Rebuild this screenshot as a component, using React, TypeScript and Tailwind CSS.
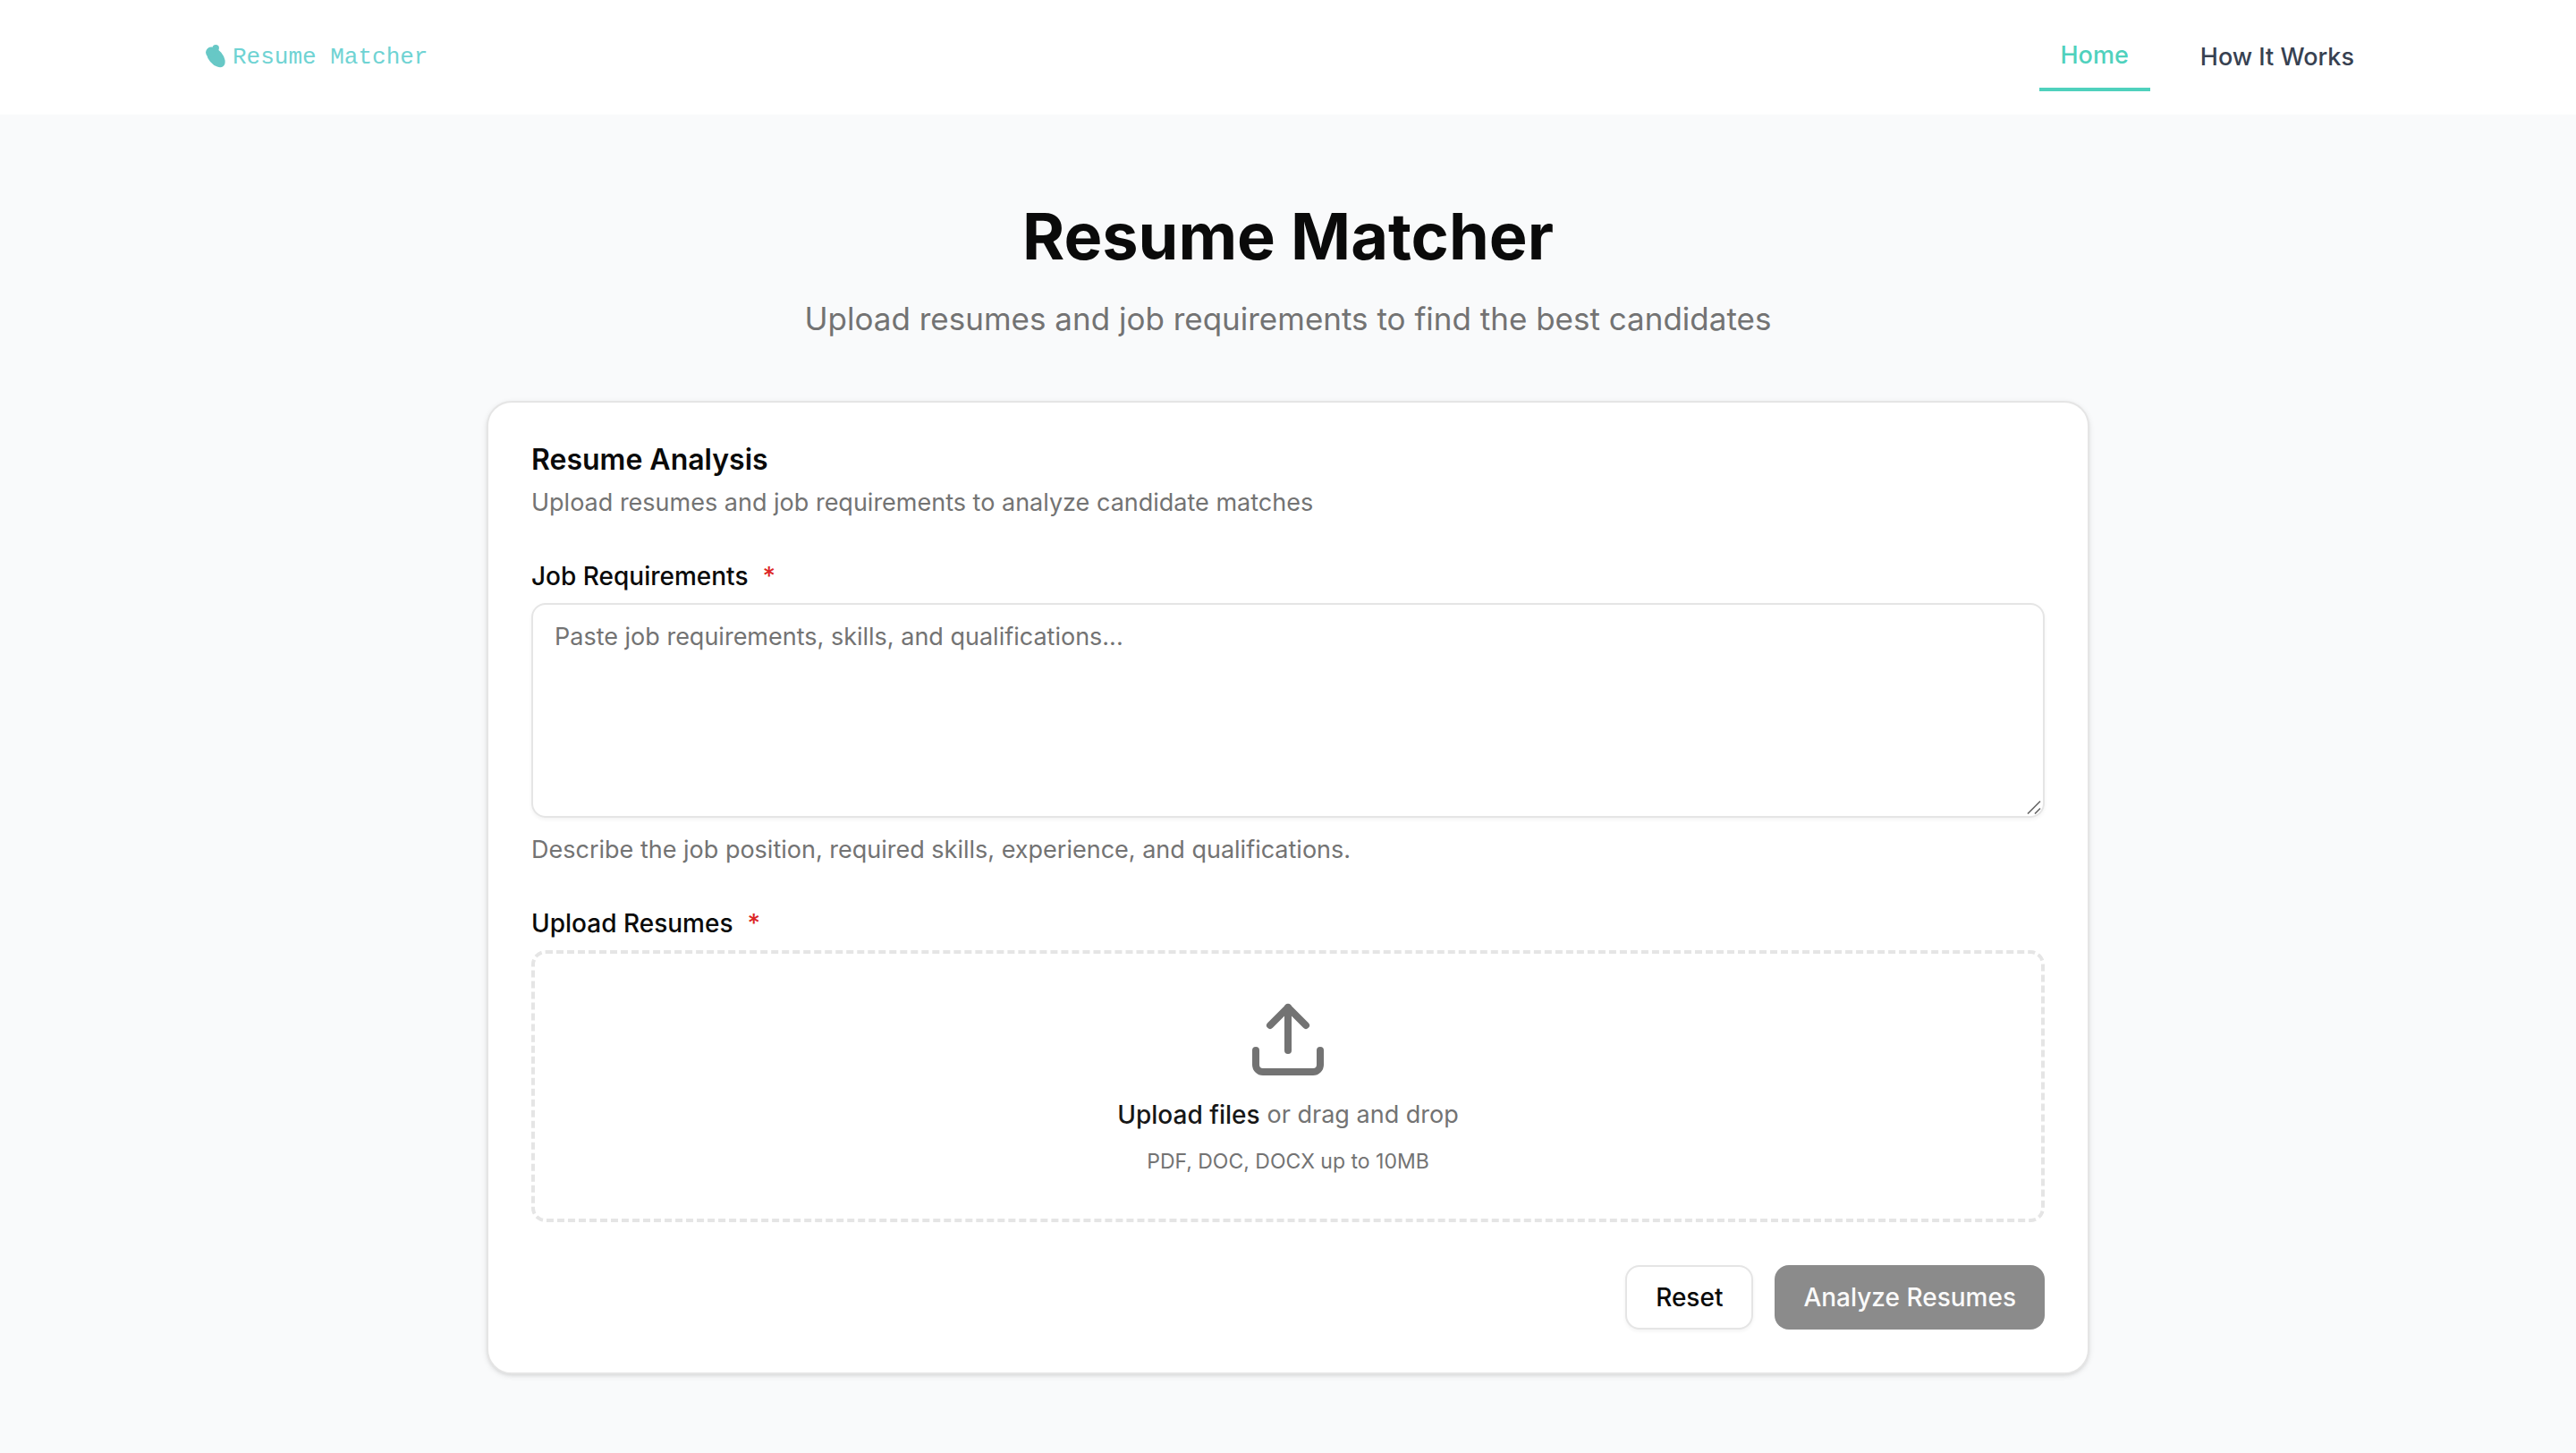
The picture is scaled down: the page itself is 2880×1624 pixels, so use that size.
import React, { useState } from "react";

function LogoMark() {
  return (
    <svg viewBox="0 0 36 36" className="size-9 shrink-0" aria-hidden="true">
      <g fill="#67c8c6">
        <ellipse cx="17.2" cy="17.8" rx="13.2" ry="8" transform="rotate(50 17.2 17.8)" />
        <circle cx="11.5" cy="12.5" r="5.4" />
        <circle cx="17.2" cy="7.8" r="3.7" />
      </g>
    </svg>
  );
}

function UploadIcon() {
  return (
    <svg
      viewBox="0 0 24 24"
      className="size-24 text-[#737373]"
      fill="none"
      stroke="currentColor"
      strokeWidth="2"
      strokeLinecap="round"
      strokeLinejoin="round"
      aria-hidden="true"
    >
      <path d="M21 15v4a2 2 0 0 1-2 2H5a2 2 0 0 1-2-2v-4" />
      <path d="M17 8l-5-5-5 5" />
      <path d="M12 3v12" />
    </svg>
  );
}

function FieldLabel({ htmlFor, children }: { htmlFor: string; children: React.ReactNode }) {
  return (
    <label htmlFor={htmlFor} className="flex gap-4 text-[28px] leading-7 font-medium">
      {children}
      <span className="text-[#dc2626]">*</span>
    </label>
  );
}

function Header() {
  return (
    <header className="bg-white">
      <div className="mx-auto flex h-32 max-w-[2560px] items-center justify-between px-16">
        <a
          href="#"
          className="flex items-center font-['Liberation_Mono',monospace] text-[26px] leading-10 text-[#6fd3d3]"
        >
          <LogoMark />
          Resume Matcher
        </a>
        <nav className="flex items-center gap-8 text-[27px] leading-10 font-medium">
          <a href="#" className="border-b-4 border-[#4fd1bd] px-6 py-4 text-[#4fd1bd]">
            Home
          </a>
          <a href="#how" className="px-6 py-4 text-[#374151]">
            How It Works
          </a>
        </nav>
      </div>
    </header>
  );
}

export default function App() {
  const [requirements, setRequirements] = useState("");

  return (
    <div className="min-h-screen bg-[#f9fafb] font-['Inter',sans-serif] text-[#0a0a0a]">
      <Header />
      <main className="mx-auto max-w-[1856px] px-8 pt-24 pb-22">
        <div className="mb-16 text-center">
          <h1 className="text-7xl leading-20 font-bold">Resume Matcher</h1>
          <p className="mt-6 text-[35px] leading-14 text-[#737373]">
            Upload resumes and job requirements to find the best candidates
          </p>
        </div>

        <form
          onSubmit={(e) => e.preventDefault()}
          onReset={() => setRequirements("")}
          className="flex flex-col gap-12 rounded-[28px] border-2 border-[#e5e5e5] bg-white p-12 shadow-[0_2px_6px_rgba(0,0,0,0.1),0_2px_4px_-2px_rgba(0,0,0,0.1)]"
        >
          <div className="flex flex-col gap-3">
            <h2 className="text-[32px] leading-8 font-semibold">Resume Analysis</h2>
            <p className="text-[27px] leading-10 text-[#737373]">
              Upload resumes and job requirements to analyze candidate matches
            </p>
          </div>

          <div className="flex flex-col gap-4">
            <FieldLabel htmlFor="requirements">Job Requirements</FieldLabel>
            <div className="relative flex">
              <textarea
                id="requirements"
                value={requirements}
                onChange={(e) => setRequirements(e.target.value)}
                placeholder="Paste job requirements, skills, and qualifications..."
                className="h-60 w-full resize-none rounded-2xl border-2 border-[#e5e5e5] px-6 py-4 text-[27px] leading-10 shadow-[0_2px_4px_rgba(0,0,0,0.05)] outline-none placeholder:text-[#737373]"
              />
              <svg
                viewBox="0 0 16 16"
                className="pointer-events-none absolute right-1 bottom-1 size-4"
                stroke="#666666"
                strokeWidth="1.6"
                aria-hidden="true"
              >
                <path d="M1 15.5L15 1.5M9 15.5L15 9.5" />
              </svg>
            </div>
            <p className="text-[27px] leading-10 text-[#737373]">
              Describe the job position, required skills, experience, and qualifications.
            </p>
          </div>

          <div className="flex flex-col gap-4">
            <FieldLabel htmlFor="resumes">Upload Resumes</FieldLabel>
            <div className="flex flex-col items-center gap-4 rounded-2xl border-4 border-dashed border-[#e5e5e5] py-12">
              <UploadIcon />
              <p className="flex gap-2 text-[27px] leading-10 text-[#737373]">
                <label htmlFor="resumes" className="relative cursor-pointer text-[28px] font-medium text-[#171717]">
                  Upload files
                  <input id="resumes" type="file" multiple accept=".pdf,.doc,.docx" className="sr-only" />
                </label>
                <span>or drag and drop</span>
              </p>
              <p className="text-[23px] leading-8 text-[#737373]">PDF, DOC, DOCX up to 10MB</p>
            </div>
          </div>

          <div className="flex justify-end gap-6 text-[28px] leading-10 font-medium">
            <button
              type="reset"
              className="h-18 rounded-2xl border-2 border-[#e5e5e5] bg-white px-8 shadow-[0_2px_4px_rgba(0,0,0,0.05)]"
            >
              Reset
            </button>
            <button type="submit" disabled className="h-18 rounded-2xl bg-[#8b8b8b] px-8 text-[#fafafa]">
              Analyze Resumes
            </button>
          </div>
        </form>
      </main>
    </div>
  );
}
